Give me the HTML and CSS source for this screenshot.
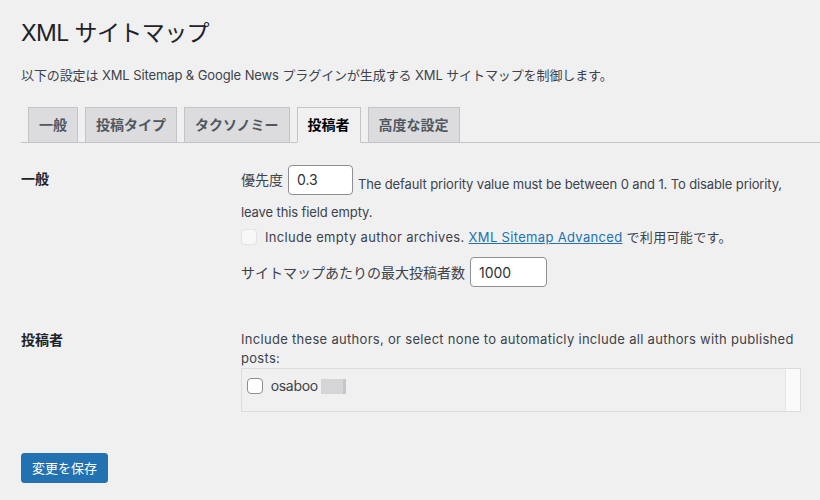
FILE: index.html
```html
<!DOCTYPE html>
<html lang="ja">
<head>
<meta charset="utf-8">
<title>XML サイトマップ</title>
<link rel="stylesheet" href="styles.css">
</head>
<body>
<div class="wrap">
  <h1 class="title">XML サイトマップ</h1>
  <p class="intro">以下の設定は XML Sitemap &amp; Google News プラグインが生成する XML サイトマップを制御します。</p>
  <nav class="tabs">
    <a class="tab" href="#">一般</a>
    <a class="tab" href="#">投稿タイプ</a>
    <a class="tab" href="#">タクソノミー</a>
    <a class="tab active" href="#">投稿者</a>
    <a class="tab" href="#">高度な設定</a>
  </nav>
  <div class="form">
    <div class="row">
      <div class="th">一般</div>
      <div class="td">
        <div class="l1"><label>優先度 <input class="field f-small" type="text" value="0.3"></label> <span class="desc">The default priority value must be between 0 and 1. To disable priority, leave this field empty.</span></div>
        <label class="l3"><input class="check" type="checkbox" disabled> <span class="desc">Include empty author archives. <a class="link" href="#">XML Sitemap Advanced</a> で利用可能です。</span></label>
        <label class="l4">サイトマップあたりの最大投稿者数 <input class="field f-wide" type="text" value="1000"></label>
      </div>
    </div>
    <div class="row">
      <div class="th">投稿者</div>
      <div class="td">
        <p class="pdesc">Include these authors, or select none to automaticly include all authors with published posts:</p>
        <div class="authors">
          <ul class="author-list">
            <li><label class="author"><input class="check list-check" type="checkbox"> osaboo <span class="redact"></span></label></li>
          </ul>
          <div class="scrolltrack"></div>
        </div>
      </div>
    </div>
  </div>
  <p class="submit"><button class="btn" type="button">変更を保存</button></p>
</div>
</body>
</html>
```

FILE: styles.css
```css
html, body {
  margin: 0;
  padding: 0;
  background: #f0f0f1;
}
body {
  font-family: Inter, "Noto Sans CJK JP", sans-serif;
  font-size: 13px;
  line-height: 1.4;
  color: #3c434a;
}
.wrap {
  padding: 10px 0 0 21px;
}
.title {
  margin: 0;
  padding: 9px 0 4px;
  font-size: 23px;
  font-weight: 400;
  line-height: 1.3;
  letter-spacing: -0.6px;
  color: #1d2327;
}
.intro {
  margin: 13px 0;
  font-size: 13px;
  line-height: 1.5;
  letter-spacing: -0.1px;
}
.tabs {
  display: flex;
  align-items: flex-end;
  padding-top: 9px;
  border-bottom: 1px solid #c3c4c7;
}
.tab {
  margin-left: 7px;
  padding: 5px 10px;
  border: 1px solid #c3c4c7;
  border-bottom: none;
  background: #dcdcde;
  color: #50575e;
  font-size: 14px;
  font-weight: 600;
  line-height: 24px;
  text-decoration: none;
}
.tab.active {
  background: #f0f0f1;
  color: #000;
  border-bottom: 1px solid #f0f0f1;
  margin-bottom: -1px;
}
.form {
  margin-top: 6.5px;
  padding-right: 19px;
}
.row {
  display: grid;
  grid-template-columns: 210px 1fr;
}
.th {
  padding: 20px 10px 20px 0;
  font-size: 14px;
  font-weight: 600;
  line-height: 1.3;
  color: #1d2327;
}
.td {
  padding: 15px 0 15px 10px;
  font-size: 14px;
}
.l1 {
  line-height: 25px;
}
.desc {
  font-size: 13px;
}
.l1 .desc {
  vertical-align: -3px;
  letter-spacing: -0.12px;
}
.l3 {
  display: block;
  line-height: 24px;
}
.l3 .desc {
  letter-spacing: 0.33px;
}
.l4 {
  display: block;
  margin: 8px 0 9px;
  line-height: 1.3;
}
.field {
  box-sizing: border-box;
  height: 30px;
  margin: 0 1px;
  padding: 0 8px;
  border: 1px solid #8c8f94;
  border-radius: 4px;
  background: #fff;
  color: #2c3338;
  font-family: Inter, sans-serif;
  font-size: 14px;
  line-height: 28px;
  vertical-align: baseline;
}
.f-small { width: 65px; }
.f-wide { width: 77px; }
.check {
  appearance: none;
  -webkit-appearance: none;
  box-sizing: border-box;
  width: 16px;
  height: 16px;
  margin: -4px 4px 0 0;
  padding: 0;
  border: 1px solid #8c8f94;
  border-radius: 4px;
  background: #fff;
  vertical-align: middle;
}
.check:disabled {
  border-color: rgba(220, 220, 222, 0.75);
  background: rgba(255, 255, 255, 0.5);
}
.link {
  color: #2271b1;
  text-decoration: underline;
}
.pdesc {
  margin: 4px 0 0;
  font-size: 13px;
  line-height: 18.2px;
  letter-spacing: 0.3px;
}
.authors {
  display: flex;
  height: 42px;
  margin-top: 1.4px;
  border: 1px solid #dcdcde;
}
.author-list {
  flex: 1;
  margin: 0;
  padding: 8px 5px 0;
  list-style: none;
  font-size: 14px;
  line-height: 18.2px;
}
.author {
  letter-spacing: -0.3px;
}
.list-check {
  margin-top: -2px;
}
.redact {
  display: inline-block;
  width: 25px;
  height: 15px;
  vertical-align: -3px;
  background: #d5d5d7;
  box-shadow: inset -3px 0 0 #c6c6c8;
}
.scrolltrack {
  width: 14px;
  background: #fafafa;
  border-left: 1px solid #e6e6e6;
}
.submit {
  margin: 20px 0 0;
  padding-top: 6px;
}
.btn {
  box-sizing: border-box;
  min-height: 30px;
  margin: 0;
  padding: 0 10px;
  border: 1px solid #2271b1;
  border-radius: 3px;
  background: #2271b1;
  color: #fff;
  font-family: Inter, "Noto Sans CJK JP", sans-serif;
  font-size: 13px;
  line-height: 28px;
  cursor: pointer;
}
```
